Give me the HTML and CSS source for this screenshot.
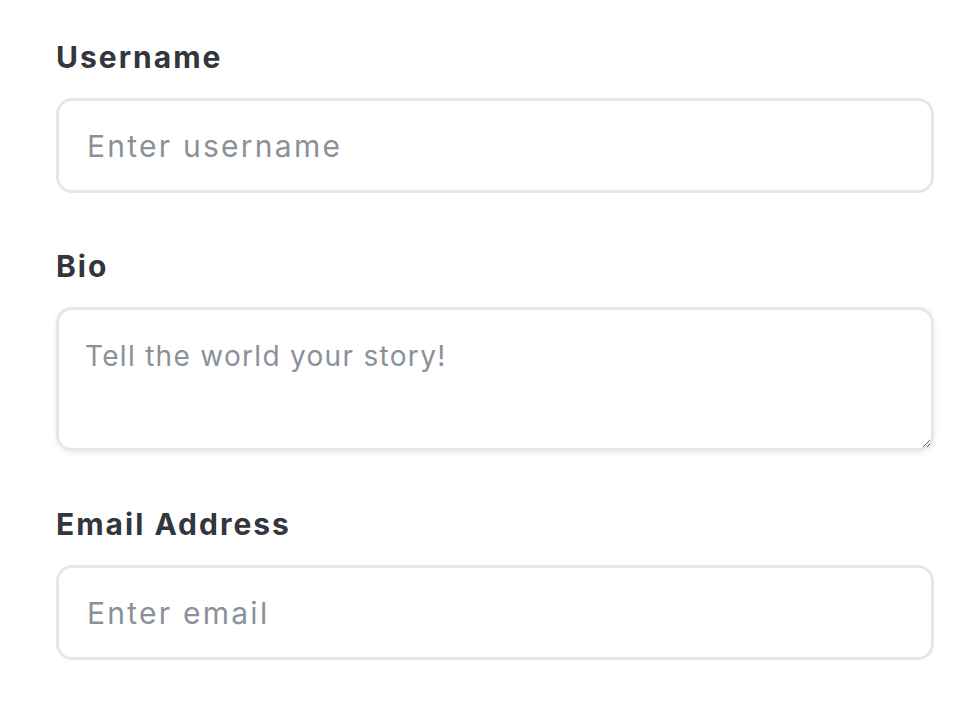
FILE: index.html
```html
<!DOCTYPE html>
<html>
<head>
<meta charset="utf-8">
<link rel="stylesheet" href="styles.css">
</head>
<body>
<form class="form">
  <div class="field">
    <label class="label" for="u">Username</label>
    <input class="input" id="u" type="text" placeholder="Enter username">
  </div>
  <div class="field">
    <label class="label" for="b">Bio</label>
    <textarea class="textarea" id="b" placeholder="Tell the world your story!"></textarea>
  </div>
  <div class="field">
    <label class="label" for="e">Email Address</label>
    <input class="input" id="e" type="email" placeholder="Enter email">
  </div>
</form>
</body>
</html>
```
FILE: styles.css
```css
html, body {
  margin: 0;
  padding: 0;
  background: #ffffff;
}
.form {
  font-family: Inter, "Noto Sans", sans-serif;
  padding: 36px 28px 0 56px;
  width: 878px;
  display: flex;
  flex-direction: column;
  gap: 52px;
}
.field {
  display: flex;
  flex-direction: column;
}
.label {
  font-size: 30px;
  line-height: 42px;
  font-weight: 700;
  letter-spacing: 2px;
  color: #33363d;
  margin-bottom: 20px;
}
.input, .textarea {
  box-sizing: border-box;
  width: 878px;
  border: 3px solid #e5e7eb;
  border-radius: 16px;
  font-family: inherit;
  font-size: 30px;
  color: #111827;
  background: #fff;
  outline: none;
}
.input {
  height: 95px;
  padding: 0 28px;
  letter-spacing: 2.25px;
}
.textarea {
  height: 144px;
  padding: 25px 26px;
  font-size: 28px;
  line-height: 42px;
  letter-spacing: 1.3px;
  resize: vertical;
  box-shadow: 0 2px 6px rgba(0, 0, 0, 0.08);
}
.input::placeholder, .textarea::placeholder {
  color: #8b9099;
}
```
